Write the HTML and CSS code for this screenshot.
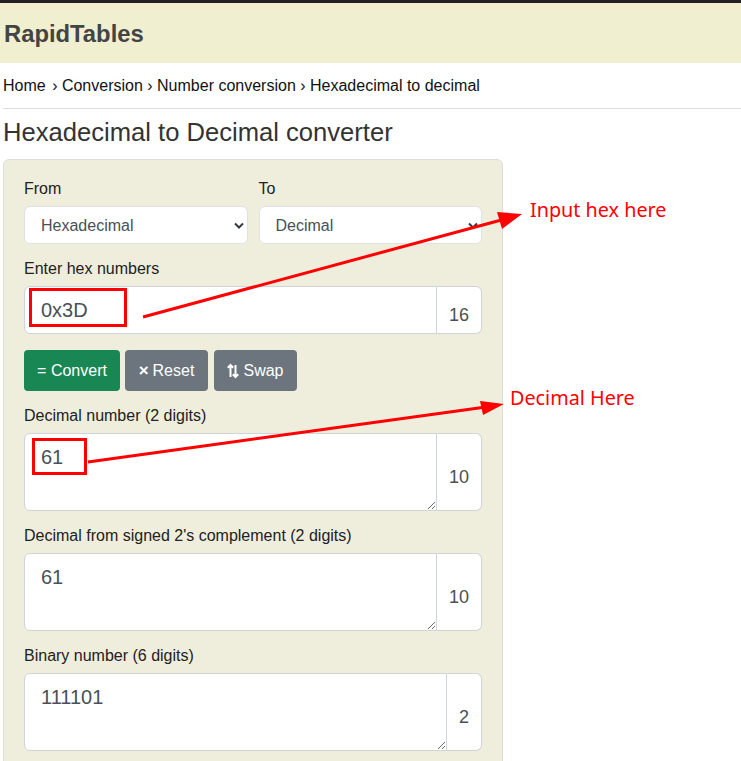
FILE: index.html
```html
<!DOCTYPE html>
<html>
<head>
<meta charset="utf-8">
<link rel="stylesheet" href="styles.css">
</head>
<body>
<div class="topbar"></div>
<header class="header"><span class="logo">RapidTables</span></header>
<nav class="crumbs">Home <span class="sp"></span>› Conversion › Number conversion › Hexadecimal to decimal</nav>
<hr class="rule">
<h1 class="title">Hexadecimal to Decimal converter</h1>
<div class="card">
  <div class="row2">
    <div class="col">
      <label class="lbl">From</label>
      <div class="selwrap">
        <select class="sel"><option>Hexadecimal</option></select>
        <svg class="chev" width="10" height="7" viewBox="0 0 10 7"><path d="M1 1.5 L5 5.5 L9 1.5" fill="none" stroke="#343a40" stroke-width="2"/></svg>
      </div>
    </div>
    <div class="col">
      <label class="lbl">To</label>
      <div class="selwrap">
        <select class="sel"><option>Decimal</option></select>
        <svg class="chev" width="10" height="7" viewBox="0 0 10 7"><path d="M1 1.5 L5 5.5 L9 1.5" fill="none" stroke="#343a40" stroke-width="2"/></svg>
      </div>
    </div>
  </div>
  <label class="lbl">Enter hex numbers</label>
  <div class="group">
    <input class="field" value="0x3D">
    <span class="addon">16</span>
  </div>
  <div class="btns">
    <button class="btn green">= Convert</button>
    <button class="btn grey"><span class="x">×</span> Reset</button>
    <button class="btn grey"><svg class="swap" width="12" height="16" viewBox="0 0 12 16"><path d="M3.5 14 V2 M0.8 4.8 L3.5 2 L6.2 4.8 M8.5 2 V14 M5.8 11.2 L8.5 14 L11.2 11.2" fill="none" stroke="#fff" stroke-width="2"/></svg> Swap</button>
  </div>
  <label class="lbl">Decimal number (2 digits)</label>
  <div class="group tall">
    <textarea class="area" readonly>61</textarea>
    <span class="addon">10</span>
  </div>
  <label class="lbl">Decimal from signed 2's complement (2 digits)</label>
  <div class="group tall">
    <textarea class="area" readonly>61</textarea>
    <span class="addon">10</span>
  </div>
  <label class="lbl">Binary number (6 digits)</label>
  <div class="group tall">
    <textarea class="area" readonly>111101</textarea>
    <span class="addon">2</span>
  </div>
</div>

<svg class="overlay" width="741" height="761" viewBox="0 0 741 761">
  <rect x="30.5" y="289.5" width="95" height="36" fill="none" stroke="#f00" stroke-width="3"/>
  <rect x="33.5" y="439.5" width="52" height="34" fill="none" stroke="#f00" stroke-width="3"/>
  <line x1="143" y1="317" x2="505" y2="219" stroke="#f00" stroke-width="3"/>
  <polygon points="522,214 497,212 502,229" fill="#f00"/>
  <line x1="88" y1="462" x2="486" y2="407" stroke="#f00" stroke-width="3"/>
  <polygon points="504,404 480,401 483,415" fill="#f00"/>
</svg>
<span class="note note1">Input hex here</span>
<span class="note note2">Decimal Here</span>
</body>
</html>
```
FILE: styles.css
```css
* { box-sizing: border-box; }
html, body { margin: 0; padding: 0; background: #fff; }
body {
  font-family: "Liberation Sans", Arial, sans-serif;
  color: #212529;
  width: 741px;
  height: 761px;
  overflow: hidden;
  position: relative;
}
.topbar { height: 3px; background: #222; }
.header {
  height: 60px;
  background: #f0efd0;
  display: flex;
  align-items: center;
  padding-left: 4px;
}
.logo {
  font-weight: bold;
  font-size: 23.8px;
  color: #444;
  position: relative;
  top: 1px;
}
.crumbs {
  font-size: 16px;
  color: #111;
  padding: 13px 0 0 3px;
  height: 45px;
  line-height: 19px;
}
.sp { display: inline-block; width: 2px; }
.rule {
  margin: 0 0 0 3px;
  border: 0;
  border-top: 1px solid #ddd;
  height: 0;
}
.title {
  font-weight: normal;
  font-size: 25.6px;
  color: #333;
  margin: 0;
  padding: 8px 0 0 3px;
  height: 50px;
  line-height: 30px;
}
.card {
  margin-left: 3px;
  width: 500px;
  height: 700px;
  background: #efeddc;
  border: 1px solid #ddd;
  border-radius: 6px;
  padding: 16px 20px 0 20px;
}
.row2 { display: flex; gap: 11px; margin-bottom: 12px; }
.col { flex: 1; }
.lbl {
  display: block;
  font-size: 16px;
  line-height: 24px;
  padding-top: 1px;
  margin-bottom: 5px;
  color: #222;
}
.selwrap { position: relative; }
.sel {
  appearance: none;
  -webkit-appearance: none;
  width: 100%;
  height: 38px;
  border: 1px solid #dee2e6;
  border-radius: 6px;
  background: #fff;
  font-family: "Liberation Sans", Arial, sans-serif;
  font-size: 16px;
  color: #495057;
  padding: 0 16px;
}
.chev { position: absolute; right: 4px; top: 16px; }
.group { display: flex; height: 48px; margin-bottom: 16px; }
.group.tall { height: 78px; margin-bottom: 12px; }
.field, .area {
  flex: 1;
  border: 1px solid #ced4da;
  border-radius: 6px 0 0 6px;
  background: #fff;
  font-family: "Liberation Sans", Arial, sans-serif;
  font-size: 20px;
  color: #495057;
  padding: 0 16px;
  min-width: 0;
}
.area {
  padding: 11px 16px;
  line-height: 24px;
  resize: vertical;
  height: 78px;
}
.addon {
  border: 1px solid #ced4da;
  border-left: 0;
  border-radius: 0 6px 6px 0;
  background: #fff;
  font-size: 18px;
  color: #495057;
  padding: 10px 12px 0 12px;
  display: flex;
  align-items: center;
}
.btns { display: flex; gap: 5px; margin-bottom: 12px; }
.btn {
  height: 41px;
  border: 0;
  border-radius: 4px;
  color: #fff;
  font-family: "Liberation Sans", Arial, sans-serif;
  font-size: 16px;
  padding: 0 12px;
  display: flex;
  align-items: center;
  gap: 4px;
}
.btn.green { background: #198754; width: 96px; justify-content: center; }
.btn.grey { background: #6c757d; }
.btn.grey:nth-child(2) { width: 83px; justify-content: center; margin-left: 0; }
.btn.grey:nth-child(3) { width: 83px; justify-content: center; margin-left: 1px; }
.x { font-weight: bold; font-size: 17px; }
.overlay { position: absolute; left: 0; top: 0; pointer-events: none; }
.note {
  position: absolute;
  font-family: "Noto Sans", "Open Sans", sans-serif;
  font-size: 19.8px;
  color: #f00;
  line-height: 24px;
  white-space: nowrap;
}
.note1 { left: 530px; top: 198px; }
.note2 { left: 510px; top: 386px; }
```
